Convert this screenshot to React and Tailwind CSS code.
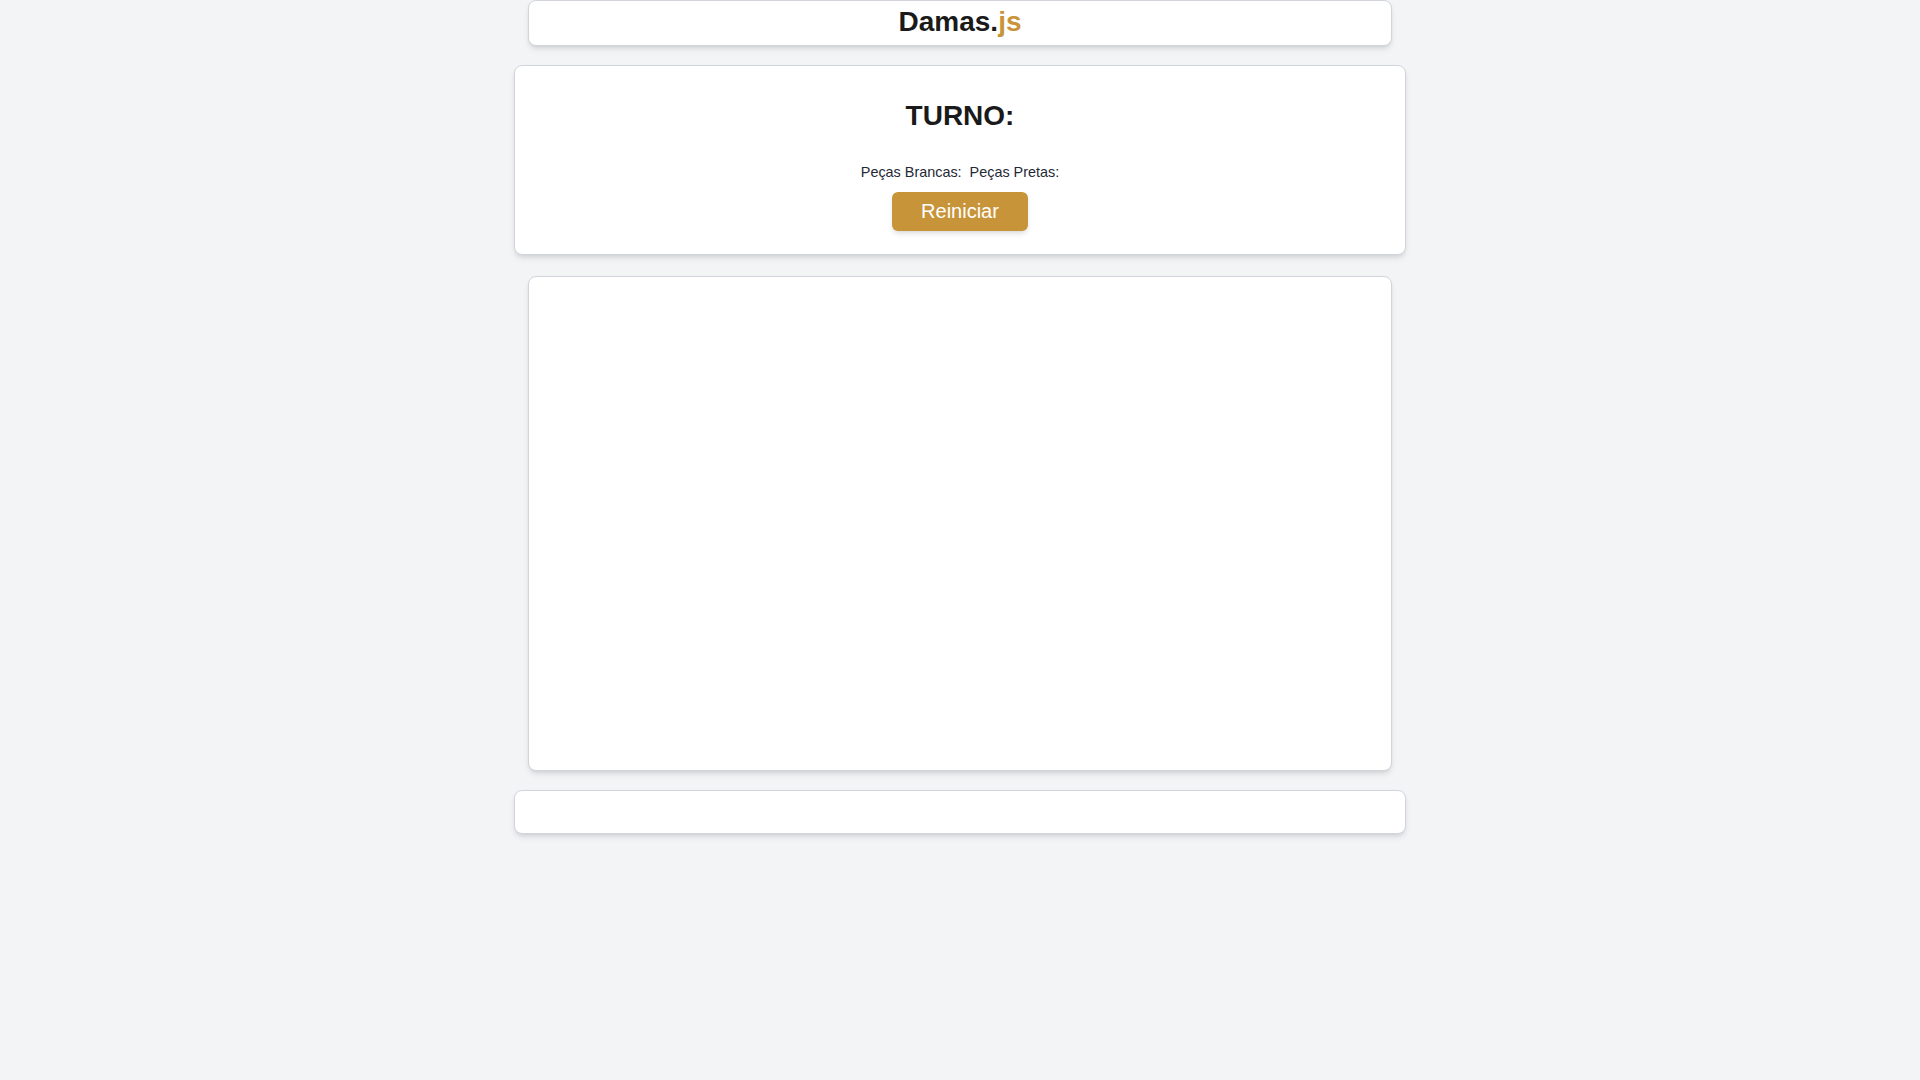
export default function App() {
  return (
    <div className="min-h-screen bg-[#f3f4f6] font-['Liberation_Sans',Arial,sans-serif] text-[#1a1a1a]">
      <div className="flex flex-col items-center">

        <header className="w-[864px] h-[46px] bg-white border border-[#d1d5db] rounded-lg shadow-md flex justify-center pt-[5px]">
          <h1 className="text-[28px] leading-[32px] font-bold">
            Damas.<span className="text-[#c8943a]">js</span>
          </h1>
        </header>

        <section className="w-[892px] h-[190px] mt-[19px] bg-white border border-[#d1d5db] rounded-lg shadow-md flex flex-col items-center pt-[34px]">
          <h2 className="text-[28px] leading-[32px] font-bold">
            TURNO:
          </h2>

          <div className="mt-[32px] flex gap-[8px] text-[14.4px] leading-[16px] text-[#1f2937]">
            <span>Peças Brancas:</span>
            <span>Peças Pretas:</span>
          </div>

          <button className="mt-[12px] bg-[#c8943a] text-white text-[20px] leading-[23px] px-[29px] py-[8px] rounded-md shadow-md">
            Reiniciar
          </button>
        </section>

        <section className="w-[864px] h-[495px] mt-[21px] bg-white border border-[#d1d5db] rounded-lg shadow-md"></section>

        <footer className="w-[892px] h-[44px] mt-[19px] bg-white border border-[#d1d5db] rounded-lg shadow-md"></footer>

      </div>
    </div>
  );
}
